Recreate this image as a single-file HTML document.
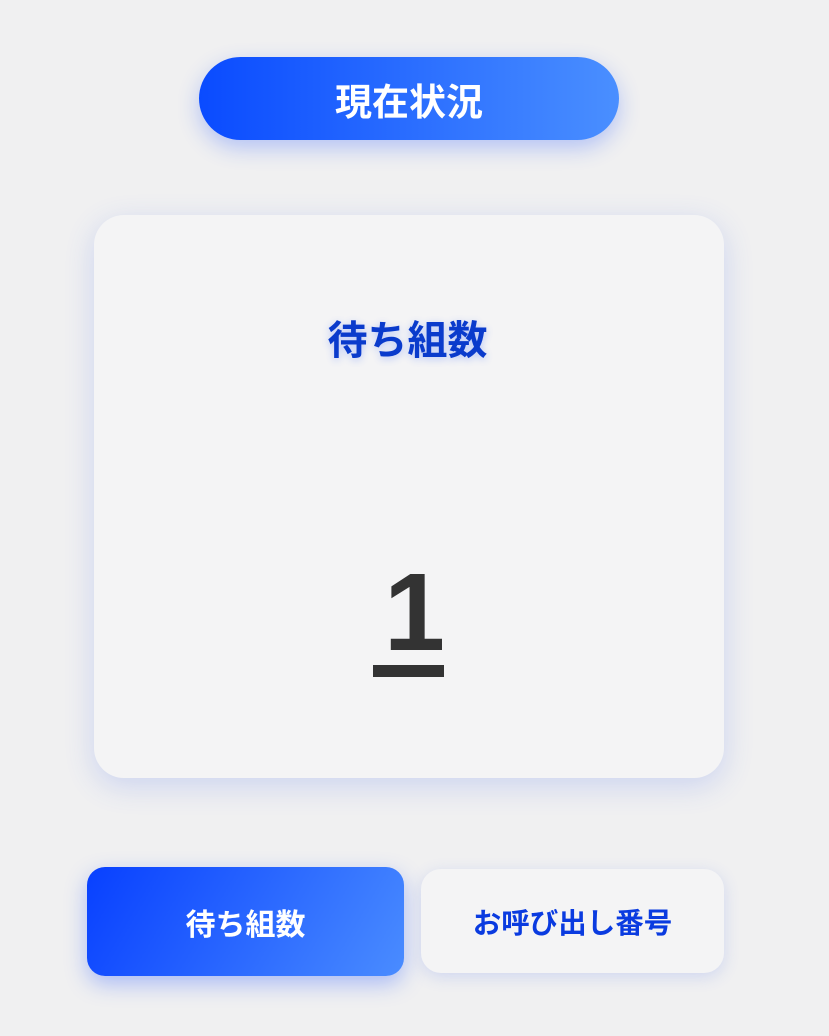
<!DOCTYPE html>
<html><head><meta charset="utf-8"><style>
html,body{margin:0;padding:0;width:829px;height:1036px;background:#f0f0f1;overflow:hidden;font-family:"Liberation Sans","Noto Sans CJK JP",sans-serif;}
.pill{position:absolute;left:199px;top:57px;width:420px;height:83px;border-radius:42px;background:linear-gradient(90deg,#0a4bff,#4a8fff);box-shadow:0 8px 22px rgba(40,90,255,.3);color:#fff;font-weight:700;font-size:37px;display:flex;align-items:center;justify-content:center;}
.card{position:absolute;left:94px;top:215px;width:630px;height:563px;border-radius:30px;background:#f4f4f5;box-shadow:0 8px 30px rgba(60,100,240,.2);}
.h{position:absolute;left:0;width:815px;top:313px;text-align:center;color:#0a3bcc;font-weight:700;font-size:40px;line-height:56px;text-shadow:0 2px 8px rgba(40,90,255,.3);}
.num{position:absolute;left:0;right:0;top:548px;text-align:center;color:#333;font-weight:700;font-size:110px;line-height:130px;}
.ul{position:absolute;left:373px;top:665px;width:71px;height:12px;background:#333;}
.b1{position:absolute;left:87px;top:867px;width:317px;height:109px;border-radius:18px;background:linear-gradient(120deg,#0840ff,#4a8cff);box-shadow:0 8px 22px rgba(40,90,255,.35);color:#fff;font-weight:700;font-size:30px;display:flex;align-items:center;justify-content:center;}
.b2{position:absolute;left:421px;top:869px;width:303px;height:104px;border-radius:20px;background:#f4f4f5;box-shadow:0 4px 16px rgba(60,100,240,.18);color:#0a3be0;font-weight:700;font-size:28.5px;display:flex;align-items:center;justify-content:center;}
</style></head><body>
<div class="pill">現在状況</div>
<div class="card"></div>
<div class="h">待ち組数</div>
<div class="num">1</div>
<div class="ul"></div>
<div class="b1">待ち組数</div>
<div class="b2">お呼び出し番号</div>
</body></html>
